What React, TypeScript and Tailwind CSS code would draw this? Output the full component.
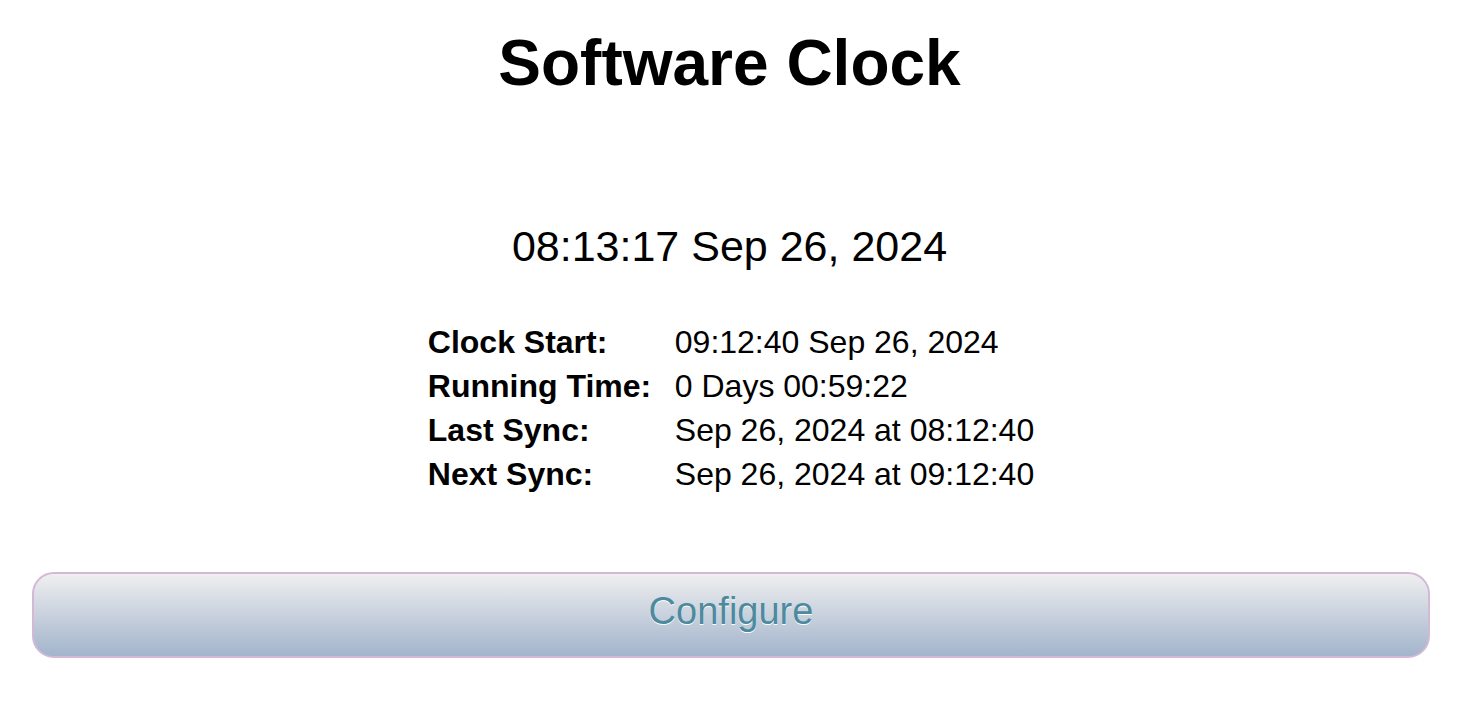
const info = [
  { label: "Clock Start:", value: "09:12:40 Sep 26, 2024" },
  { label: "Running Time:", value: "0 Days 00:59:22" },
  { label: "Last Sync:", value: "Sep 26, 2024 at 08:12:40" },
  { label: "Next Sync:", value: "Sep 26, 2024 at 09:12:40" },
];

export default function App() {
  return (
    <div className="min-h-[720px] w-full bg-white text-black font-['Liberation_Sans',Arial,sans-serif] pt-[31px]">
      <h1 className="text-center text-[64px] leading-none font-bold">Software Clock</h1>

      <div className="mt-[130px] text-center text-[43px] leading-none">08:13:17 Sep 26, 2024</div>

      <div className="mx-auto mt-[52px] grid w-fit grid-cols-[247px_auto] pl-[3px] text-[32px] leading-[44px]">
        {info.map((row) => (
          <div key={row.label} className="contents">
            <div className="font-bold whitespace-nowrap">{row.label}</div>
            <div className="whitespace-nowrap">{row.value}</div>
          </div>
        ))}
      </div>

      <button
        type="button"
        className="mt-[76px] ml-[32px] block w-[1398px] h-[86px] rounded-[22px] border-2 border-[#d3b9d6] bg-gradient-to-b from-[#efefef] to-[#a3b4cc] pt-[18px] pb-[26px] text-center text-[38px] leading-[38px] text-[#4e8a9d] [text-shadow:0_1px_0_#ffffff]"
      >
        Configure
      </button>
    </div>
  );
}
